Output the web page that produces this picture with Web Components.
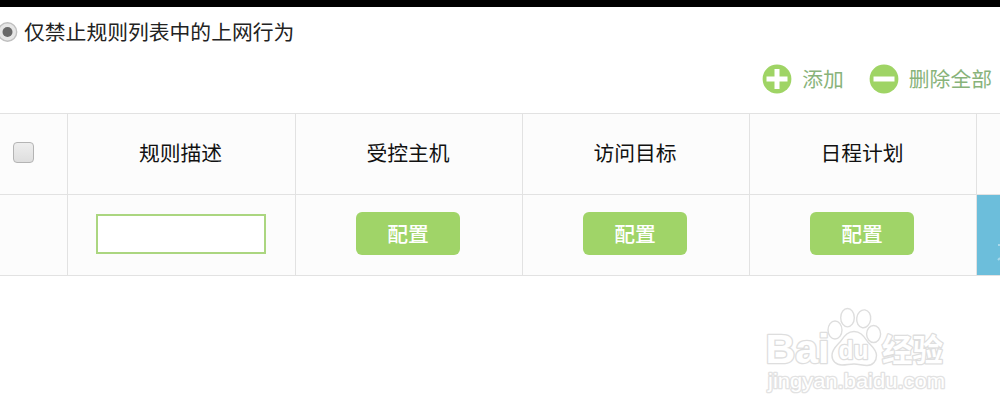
<!DOCTYPE html>
<html lang="zh-CN">
<head>
<meta charset="utf-8">
<title>上网控制</title>
<style>
    html, body {
        margin: 0;
        height: 415px;
        overflow: hidden;
        background: #fff;
    }
</style>
</head>
<body>
<rule-page></rule-page>

<script>
class RuleRadio extends HTMLElement {
    connectedCallback() {
        this.attachShadow({ mode: 'open' });
        this.shadowRoot.innerHTML = `
            <style>
                :host {
                    display: flex;
                    align-items: center;
                    gap: 6px;
                    height: 30px;
                    color: #222;
                    white-space: nowrap;
                }
                svg { display: block; margin-left: -3px; }
                span { padding-bottom: 2px; }
            </style>
            <svg width="21" height="21" viewBox="0 0 21 21">
                <circle cx="10.5" cy="10" r="9.2" fill="#e6e6e6" stroke="#c0c0c0" stroke-width="1.4"/>
                <circle cx="10.5" cy="10" r="5" fill="#686868"/>
            </svg>
            <span><slot></slot></span>
        `;
    }
}

class ActionLink extends HTMLElement {
    connectedCallback() {
        const plus = this.getAttribute('icon') === 'plus';
        this.attachShadow({ mode: 'open' });
        this.shadowRoot.innerHTML = `
            <style>
                :host {
                    display: flex;
                    align-items: center;
                    gap: 10px;
                    color: #88b37a;
                    white-space: nowrap;
                }
                svg { display: block; }
                span { padding-bottom: 2px; }
            </style>
            <svg width="30" height="30" viewBox="0 0 30 30">
                <circle cx="15" cy="15" r="14.4" fill="#9fd465"/>
                <path d="M4.5 15H25.5${plus ? 'M15 5V25' : ''}" stroke="#fff" stroke-width="5"/>
            </svg>
            <span><slot></slot></span>
        `;
    }
}

class ConfigButton extends HTMLElement {
    connectedCallback() {
        this.attachShadow({ mode: 'open' });
        this.shadowRoot.innerHTML = `
            <style>
                :host { display: block; }
                button {
                    display: block;
                    width: 104px;
                    height: 43px;
                    margin-bottom: 3px;
                    padding: 0 0 2px;
                    border: 0;
                    border-radius: 6px;
                    background: #a0d468;
                    color: #fff;
                    font: inherit;
                    font-weight: 500;
                }
            </style>
            <button type="button"><slot></slot></button>
        `;
    }
}

class RuleTable extends HTMLElement {
    connectedCallback() {
        this.attachShadow({ mode: 'open' });
        this.shadowRoot.innerHTML = `
            <style>
                :host { display: block; color: #111; }
                .grid {
                    display: grid;
                    grid-template-columns: 68px 228px 227px 227px 227px 23px;
                    grid-template-rows: 81px 81px;
                    border-top: 1px solid #e2e2e2;
                }
                .cell {
                    display: flex;
                    align-items: center;
                    justify-content: center;
                    box-sizing: border-box;
                    border-right: 1px solid #e2e2e2;
                    border-bottom: 1px solid #e2e2e2;
                    background: #fcfcfc;
                }
                .head { padding: 0 2px 4px 0; }
                .conf { padding-right: 2px; }
                .last { border-right: 0; }
                .check {
                    box-sizing: border-box;
                    width: 21px;
                    height: 21px;
                    margin: 0 20px 3px 0;
                    border: 1.5px solid #b4b4b4;
                    border-radius: 4px;
                    background: linear-gradient(#eee, #dedede);
                }
                input {
                    box-sizing: border-box;
                    width: 170px;
                    height: 40px;
                    margin: 0 2px 2px 0;
                    border: 2px solid #abd680;
                    border-radius: 0;
                    background: #fff;
                }
                .blue { background: #6cbedb; justify-content: flex-end; }
                .blue svg { display: block; }
            </style>
            <div class="grid">
                <div class="cell"><span class="check"></span></div>
                <div class="cell head">规则描述</div>
                <div class="cell head">受控主机</div>
                <div class="cell head">访问目标</div>
                <div class="cell head">日程计划</div>
                <div class="cell last"></div>
                <div class="cell"></div>
                <div class="cell"><input type="text"></div>
                <div class="cell conf"><config-button>配置</config-button></div>
                <div class="cell conf"><config-button>配置</config-button></div>
                <div class="cell conf"><config-button>配置</config-button></div>
                <div class="cell last blue">
                    <!-- left edge of a label cut off by the window -->
                    <svg width="3" height="80" viewBox="0 0 3 80">
                        <path d="M1 50H3M1 65L3 63" stroke="#a9d9ea" stroke-width="2"/>
                    </svg>
                </div>
            </div>
        `;
    }
}

class SiteWatermark extends HTMLElement {
    connectedCallback() {
        this.attachShadow({ mode: 'open' });
        this.shadowRoot.innerHTML = `
            <style>
                :host { display: block; }
                svg { display: block; overflow: visible; }
                .line {
                    fill: #fff;
                    stroke: #dedede;
                    stroke-width: 1.4;
                    stroke-linejoin: round;
                }
                text { paint-order: stroke; }
                .latin { font-family: "Liberation Sans", sans-serif; font-weight: bold; }
                .cjk { font-family: "Noto Sans CJK SC", sans-serif; font-weight: bold; }
                .url { font-family: "Liberation Sans", sans-serif; stroke: #e2e2e2; }
                .big { stroke-width: 2.6; }
            </style>
            <svg width="190" height="100" viewBox="760 300 190 100">
                <text class="line latin big" x="765.5" y="363" font-size="40" textLength="64" lengthAdjust="spacingAndGlyphs">Bai</text>
                <g class="line">
                    <ellipse cx="835" cy="330" rx="7" ry="9"/>
                    <ellipse cx="847.5" cy="317.7" rx="6.8" ry="9.2"/>
                    <ellipse cx="863.7" cy="318.8" rx="7" ry="9" transform="rotate(8 863.7 318.8)"/>
                    <ellipse cx="873.6" cy="334" rx="7" ry="8.5"/>
                    <path d="M854 331.5C847 331.5 844 337 840.5 341.5C836.5 346 832 349 832 355.5C832 361 836 365 842 365C847 365 849 364 854 364C859 364 862 365.5 867 365.5C873 365.5 876.5 361 876.5 355.5C876.5 349 871 346 867.5 341.5C864 337 861 331.5 854 331.5Z"/>
                </g>
                <text class="line latin big" x="838.5" y="359" font-size="25" textLength="30" lengthAdjust="spacingAndGlyphs">du</text>
                <text class="line cjk big" x="882" y="361" font-size="31" textLength="61" lengthAdjust="spacingAndGlyphs">经验</text>
                <text class="line url big" x="768" y="387.5" font-size="21" textLength="177" lengthAdjust="spacingAndGlyphs">jingyan.baidu.com</text>
            </svg>
        `;
    }
}

class RulePage extends HTMLElement {
    connectedCallback() {
        this.attachShadow({ mode: 'open' });
        this.shadowRoot.innerHTML = `
            <style>
                :host {
                    display: flex;
                    flex-direction: column;
                    box-sizing: border-box;
                    width: 1000px;
                    height: 415px;
                    border-top: 7px solid #000;
                    background: #fff;
                    font: 20.8px/30px "Noto Sans CJK SC", sans-serif;
                }
                rule-radio { margin-top: 10px; }
                .actions {
                    display: flex;
                    justify-content: flex-end;
                    gap: 25px;
                    height: 30px;
                    margin-top: 17px;
                    padding-right: 8px;
                }
                rule-table { margin-top: 19px; }
                site-watermark { margin: 24px 50px 0 auto; }
            </style>
            <rule-radio>仅禁止规则列表中的上网行为</rule-radio>
            <div class="actions">
                <action-link icon="plus">添加</action-link>
                <action-link icon="minus">删除全部</action-link>
            </div>
            <rule-table></rule-table>
            <site-watermark></site-watermark>
        `;
    }
}

customElements.define('rule-radio', RuleRadio);
customElements.define('action-link', ActionLink);
customElements.define('config-button', ConfigButton);
customElements.define('rule-table', RuleTable);
customElements.define('site-watermark', SiteWatermark);
customElements.define('rule-page', RulePage);
</script>
</body>
</html>
